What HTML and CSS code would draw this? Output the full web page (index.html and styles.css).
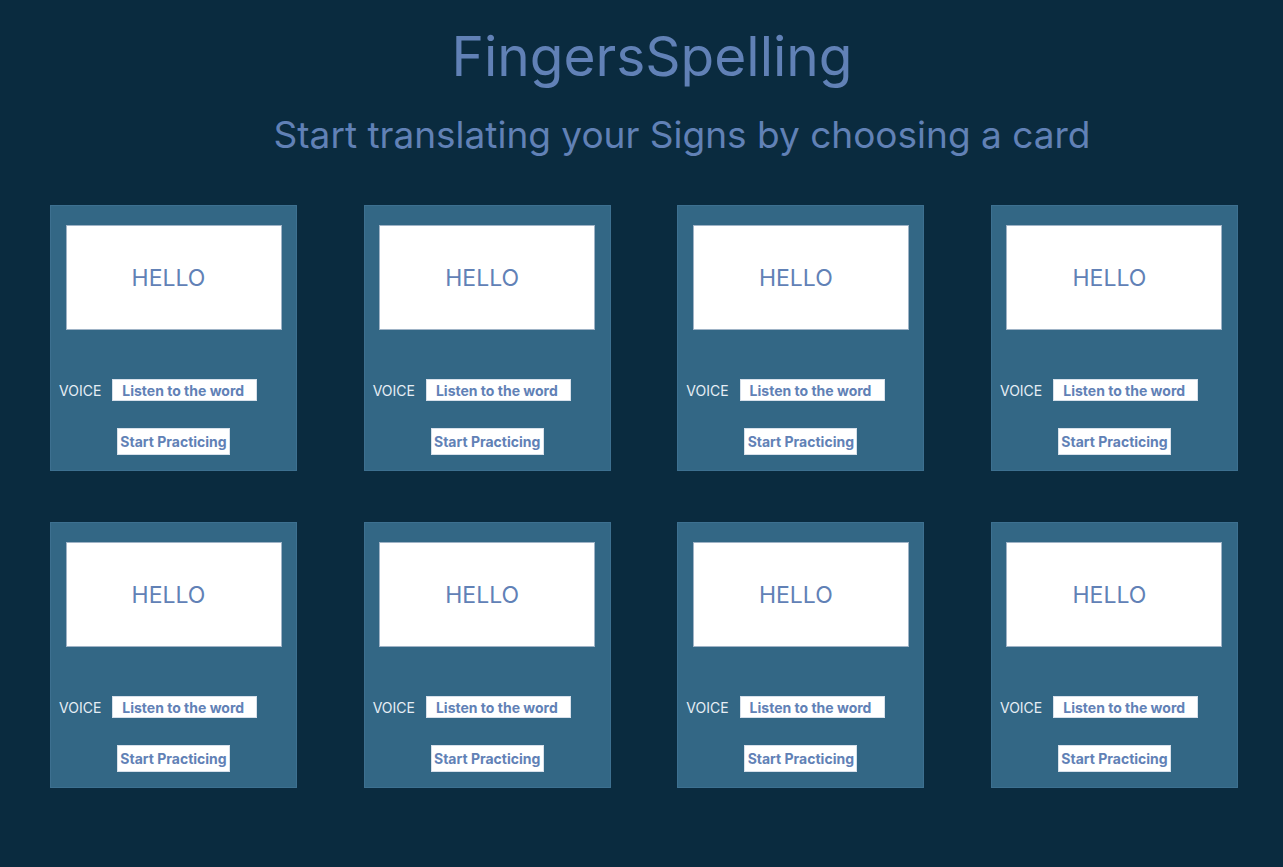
FILE: index.html
```html
<!DOCTYPE html>
<html>
<head>
<meta charset="utf-8">
<link rel="stylesheet" href="styles.css">
</head>
<body>
<header class="head">
  <h1 class="title">FingersSpelling</h1>
  <h2 class="subtitle">Start translating your Signs by choosing a card</h2>
</header>
<main class="grid">
  <div class="row">
    <div class="card"><div class="word">HELLO</div><div class="voice"><span class="label">VOICE</span><button class="listen">Listen to the word</button></div><button class="start">Start Practicing</button></div>
    <div class="card"><div class="word">HELLO</div><div class="voice"><span class="label">VOICE</span><button class="listen">Listen to the word</button></div><button class="start">Start Practicing</button></div>
    <div class="card"><div class="word">HELLO</div><div class="voice"><span class="label">VOICE</span><button class="listen">Listen to the word</button></div><button class="start">Start Practicing</button></div>
    <div class="card"><div class="word">HELLO</div><div class="voice"><span class="label">VOICE</span><button class="listen">Listen to the word</button></div><button class="start">Start Practicing</button></div>
  </div>
  <div class="row">
    <div class="card"><div class="word">HELLO</div><div class="voice"><span class="label">VOICE</span><button class="listen">Listen to the word</button></div><button class="start">Start Practicing</button></div>
    <div class="card"><div class="word">HELLO</div><div class="voice"><span class="label">VOICE</span><button class="listen">Listen to the word</button></div><button class="start">Start Practicing</button></div>
    <div class="card"><div class="word">HELLO</div><div class="voice"><span class="label">VOICE</span><button class="listen">Listen to the word</button></div><button class="start">Start Practicing</button></div>
    <div class="card"><div class="word">HELLO</div><div class="voice"><span class="label">VOICE</span><button class="listen">Listen to the word</button></div><button class="start">Start Practicing</button></div>
  </div>
</main>
</body>
</html>
```
FILE: styles.css
```css
html, body {
  margin: 0;
  padding: 0;
  background: #0a2b3f;
  height: 100%;
}
body {
  font-family: Inter, "Liberation Sans", sans-serif;
  color: #6181b6;
}
.head {
  display: flex;
  flex-direction: column;
  align-items: center;
  padding-top: 22px;
}
.title {
  margin: 0 0 0 21px;
  font-size: 55px;
  font-weight: 400;
  line-height: 68px;
}
.subtitle {
  margin: 23px 0 0 81px;
  font-size: 37px;
  font-weight: 400;
  line-height: 44px;
}
.grid {
  display: flex;
  flex-direction: column;
  gap: 51px;
  padding: 48px 45px 0 50px;
}
.row {
  display: flex;
  justify-content: space-between;
}
.card {
  width: 247px;
  height: 266px;
  box-sizing: border-box;
  background: #336785;
  border: 1px solid #3d7090;
  display: flex;
  flex-direction: column;
  align-items: center;
  padding-top: 19px;
}
.word {
  width: 216px;
  height: 105px;
  box-sizing: border-box;
  background: #fff;
  border: 1px solid #9fb3c6;
  display: flex;
  align-items: center;
  justify-content: center;
  font-size: 23px;
  padding-right: 10px;
}
.voice {
  align-self: flex-start;
  display: flex;
  align-items: center;
  gap: 11px;
  margin: 49px 0 0 8px;
}
.label {
  color: #e6eef5;
  font-size: 14px;
}
button {
  font-family: Inter, "Liberation Sans", sans-serif;
  font-weight: 700;
  font-size: 14px;
  color: #6181b6;
  background: #fff;
  border: 1px solid #d7e0ea;
  margin: 0;
  border-radius: 0;
}
.listen {
  width: 145px;
  height: 22px;
  padding: 0 0 0 9px;
  text-align: left;
}
.start {
  margin-top: 27px;
  width: 113px;
  height: 27px;
  padding: 0;
}
```
